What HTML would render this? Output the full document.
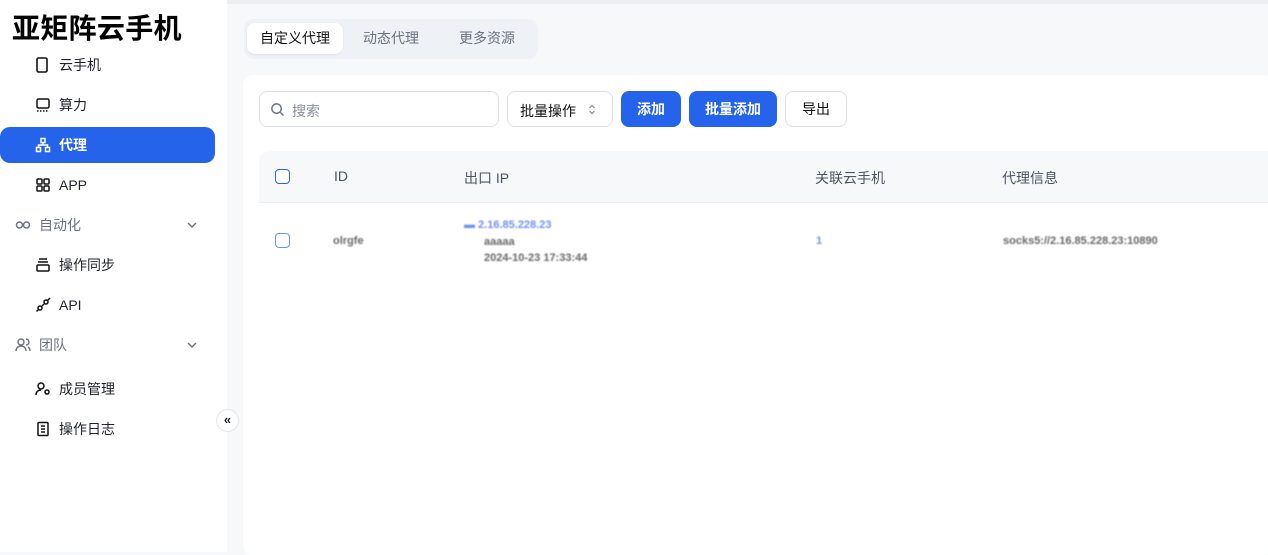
<!DOCTYPE html>
<html><head><meta charset="utf-8"><style>
*{box-sizing:border-box;margin:0;padding:0}
body{width:1268px;height:552px;overflow:hidden;background:#f7f8fa;font-family:"Liberation Sans","Noto Sans CJK SC",sans-serif;position:relative;color:#1f2329}
.side{position:absolute;left:0;top:0;width:227px;height:552px;background:#fff}
.logo{position:absolute;left:12px;top:7px;font-size:28px;font-weight:bold;color:#000;letter-spacing:0.3px}
.item{position:absolute;left:0;width:215px;height:36px;display:flex;align-items:center;font-size:14px;color:#1f2329}
.item svg{position:absolute;left:35px}
.item span{position:absolute;left:59px}
.item.g svg{left:15px}.item.g span{left:39px;color:#6b7280}
.act{background:#2563eb;border-radius:10px;color:#fff;font-weight:bold}
.main{position:absolute;left:227px;top:0;right:0;bottom:0;border-top:4px solid #eceef1}
.tabs{position:absolute;left:244px;top:19px;width:294px;height:40px;background:#eef1f5;border-radius:10px}
.tab{position:absolute;top:4px;height:31px;line-height:31px;font-size:14px;color:#6b7280}
.card{position:absolute;left:243px;top:75px;width:1030px;height:480px;background:#fff;border-radius:10px}
.inp{position:absolute;top:91px;height:36px;border:1px solid #dde1e6;border-radius:8px;background:#fff;font-size:14px}
.btn{position:absolute;top:91px;height:36px;border-radius:8px;background:#2563eb;color:#fff;font-size:14px;font-weight:bold;text-align:center;line-height:36px}
.thead{position:absolute;left:259px;top:151px;width:1020px;height:52px;background:#f7f8fa;border-radius:10px 10px 0 0;border-bottom:1px solid #eceef1;font-size:14px;color:#4b5563}
.thead div{position:absolute;top:17px}
.cb{position:absolute;width:15px;height:15px;border:1.5px solid #2563eb;border-radius:4px}
.blur{position:absolute;font-size:11px;filter:blur(0.9px);color:#666;font-weight:bold}
</style></head><body>
<div class="side">
<div class="logo">亚矩阵云手机</div>
<div class="item" style="top:47px"><svg width="14" height="16" viewBox="0 0 14 16" fill="none" stroke="#111" stroke-width="1.6"><rect x="2" y="1" width="10" height="14" rx="1.5"/><path d="M7 12h.1"/></svg><span>云手机</span></div>
<div class="item" style="top:87px"><svg width="16" height="16" viewBox="0 0 16 16" fill="none" stroke="#111" stroke-width="1.5"><rect x="2" y="2" width="12" height="9" rx="1.5"/><path d="M2 14h12" stroke-dasharray="1.5 1.5"/></svg><span>算力</span></div>
<div class="item act" style="left:0;top:127px"><svg width="16" height="16" viewBox="0 0 16 16" fill="none" stroke="#fff" stroke-width="1.5"><rect x="6" y="1.5" width="4" height="4"/><rect x="1.5" y="10.5" width="4" height="4"/><rect x="10.5" y="10.5" width="4" height="4"/><path d="M8 5.5v2.5M3.5 10.5V8h9v2.5"/></svg><span style="color:#fff">代理</span></div>
<div class="item" style="top:167px"><svg width="16" height="16" viewBox="0 0 16 16" fill="none" stroke="#111" stroke-width="1.5"><rect x="2" y="2" width="5" height="5" rx="1"/><rect x="9" y="2" width="5" height="5" rx="1"/><rect x="2" y="9" width="5" height="5" rx="1"/><rect x="9" y="9" width="5" height="5" rx="1"/></svg><span>APP</span></div>
<div class="item g" style="top:207px"><svg width="16" height="16" viewBox="0 0 16 16" fill="none" stroke="#6b7280" stroke-width="1.5"><circle cx="4.5" cy="8" r="3"/><circle cx="11.5" cy="8" r="3"/></svg><span>自动化</span><svg style="left:186px" width="12" height="12" viewBox="0 0 12 12" fill="none" stroke="#6b7280" stroke-width="1.4"><path d="M2 4l4 4 4-4"/></svg></div>
<div class="item" style="top:247px"><svg width="16" height="16" viewBox="0 0 16 16" fill="none" stroke="#111" stroke-width="1.5"><path d="M4 2h8M3 5h10"/><rect x="2" y="8" width="12" height="6" rx="1"/></svg><span>操作同步</span></div>
<div class="item" style="top:287px"><svg width="16" height="16" viewBox="0 0 16 16" fill="none" stroke="#111" stroke-width="1.5"><circle cx="5" cy="11" r="2"/><circle cx="11" cy="5" r="2"/><path d="M1.5 14.5L4 12M12.5 3.5L15 1M7 9l2-2"/></svg><span>API</span></div>
<div class="item g" style="top:327px"><svg width="16" height="16" viewBox="0 0 16 16" fill="none" stroke="#6b7280" stroke-width="1.4"><circle cx="6" cy="5" r="3"/><path d="M1 14c0-3 2-5 5-5s5 2 5 5M11 2a3 3 0 010 6M13 10c1.5 1 2 2.5 2 4"/></svg><span>团队</span><svg style="left:186px" width="12" height="12" viewBox="0 0 12 12" fill="none" stroke="#6b7280" stroke-width="1.4"><path d="M2 4l4 4 4-4"/></svg></div>
<div class="item" style="top:371px"><svg width="16" height="16" viewBox="0 0 16 16" fill="none" stroke="#111" stroke-width="1.5"><circle cx="6" cy="5" r="3"/><path d="M1 14c0-3 2-5 5-5"/><circle cx="12" cy="11" r="2"/></svg><span>成员管理</span></div>
<div class="item" style="top:411px"><svg width="16" height="16" viewBox="0 0 16 16" fill="none" stroke="#111" stroke-width="1.5"><rect x="3" y="1.5" width="10" height="13" rx="1"/><path d="M6 5h4M6 8h4M6 11h4"/></svg><span>操作日志</span></div>
</div>
<div style="position:absolute;left:216px;top:409px;width:23px;height:23px;border-radius:50%;background:#fff;border:1px solid #e5e7eb;font-size:13px;text-align:center;line-height:20px;font-weight:bold">«</div>
<div class="main"></div>
<div class="tabs">
<div class="tab" style="left:3px;width:96px;background:#fff;border-radius:8px;color:#111;text-align:center;box-shadow:0 1px 2px rgba(0,0,0,.06)">自定义代理</div>
<div class="tab" style="left:119px">动态代理</div>
<div class="tab" style="left:215px">更多资源</div>
</div>
<div class="card"></div>
<div class="inp" style="left:259px;width:240px"><svg style="position:absolute;left:10px;top:10px" width="15" height="15" viewBox="0 0 16 16" fill="none" stroke="#6b7280" stroke-width="1.5"><circle cx="7" cy="7" r="5"/><path d="M11 11l3.5 3.5"/></svg><span style="position:absolute;left:32px;top:9px;color:#8a8f98">搜索</span></div>
<div class="inp" style="left:507px;width:106px"><span style="position:absolute;left:12px;top:9px;color:#111">批量操作</span><svg style="position:absolute;left:80px;top:12px" width="8" height="11" viewBox="0 0 8 11" fill="none" stroke="#888" stroke-width="1.2"><path d="M1.5 4L4 1.5 6.5 4M1.5 7L4 9.5 6.5 7"/></svg></div>
<div class="btn" style="left:621px;width:60px">添加</div>
<div class="btn" style="left:689px;width:88px">批量添加</div>
<div class="inp" style="left:785px;width:62px;text-align:center;line-height:34px;color:#111">导出</div>
<div class="thead">
<div class="cb" style="left:16px;top:18px;background:#fff"></div>
<div style="left:75px">ID</div><div style="left:205px">出口 IP</div><div style="left:556px">关联云手机</div><div style="left:743px">代理信息</div>
</div>
<div class="cb" style="left:275px;top:233px;border-color:#6f95ee"></div>
<div class="blur" style="left:333px;top:235px">olrgfe</div>
<div class="blur" style="left:464px;top:219px;color:#6d8ff0">▬ 2.16.85.228.23</div>
<div class="blur" style="left:484px;top:236px">aaaaa</div>
<div class="blur" style="left:484px;top:252px">2024-10-23 17:33:44</div>
<div class="blur" style="left:816px;top:235px;color:#6d8ff0">1</div>
<div class="blur" style="left:1003px;top:235px">socks5://2.16.85.228.23:10890</div>
</body></html>
